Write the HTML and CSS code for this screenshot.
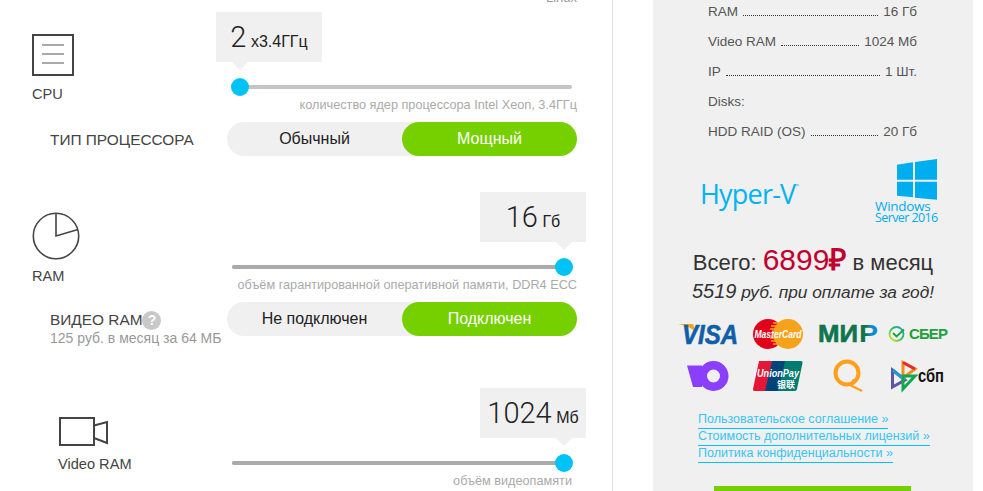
FILE: index.html
```html
<!DOCTYPE html>
<html>
<head>
    <title>Конфигуратор сервера</title>
    <link rel="stylesheet" href="styles.css">
</head>
<body>
    <div class="page">
        <div class="config">
            <div class="os-note">Linux</div>

            <div class="section section-cpu">
                <div class="resource">
                    <svg class="icon" width="42" height="42" viewBox="0 0 42 42">
                        <rect x="1" y="1" width="40" height="40" fill="none" stroke="#444" stroke-width="2"/>
                        <path d="M10 11H32M10 20H32M10 29H32" fill="none" stroke="#555" stroke-width="1.2"/>
                    </svg>
                    <div class="resource-name">CPU</div>
                </div>
                <div class="control">
                    <div class="slider">
                        <div class="bubble" style="left: -16px"><span class="big">2</span> <span class="unit">x3.4ГГц</span></div>
                        <div class="knob" style="left: 8px"></div>
                    </div>
                    <div class="caption">количество ядер процессора Intel Xeon, 3.4ГГц</div>
                </div>
                <div class="option">ТИП ПРОЦЕССОРА</div>
                <div class="toggle">
                    <div class="toggle-item">Обычный</div>
                    <div class="toggle-item active">Мощный</div>
                </div>
            </div>

            <div class="section section-ram">
                <div class="resource">
                    <svg class="icon" width="48" height="48" viewBox="0 0 48 48">
                        <circle cx="24" cy="24" r="22.7" fill="none" stroke="#444" stroke-width="1.6"/>
                        <path d="M24 1.5V24L46 17.5" fill="none" stroke="#444" stroke-width="1.6"/>
                    </svg>
                    <div class="resource-name">RAM</div>
                </div>
                <div class="control">
                    <div class="slider">
                        <div class="fill" style="width: 100%"></div>
                        <div class="bubble" style="left: 248px"><span class="big">16</span> <span class="unit">Гб</span></div>
                        <div class="knob" style="left: 332px"></div>
                    </div>
                    <div class="caption">объём гарантированной оперативной памяти, DDR4 ECC</div>
                </div>
                <div class="option option-top">
                    ВИДЕО RAM<span class="hint">?</span>
                    <div class="option-sub">125 руб. в месяц за 64 МБ</div>
                </div>
                <div class="toggle">
                    <div class="toggle-item">Не подключен</div>
                    <div class="toggle-item active">Подключен</div>
                </div>
            </div>

            <div class="section section-video">
                <div class="resource">
                    <svg class="icon" width="49" height="30" viewBox="0 0 49 30">
                        <rect x="1" y="1" width="34" height="27" fill="none" stroke="#444" stroke-width="2"/>
                        <path d="M35 8.500L48 5V26L35 21" fill="none" stroke="#444" stroke-width="2"/>
                    </svg>
                    <div class="resource-name">Video RAM</div>
                </div>
                <div class="control">
                    <div class="slider">
                        <div class="fill" style="width: 100%"></div>
                        <div class="bubble" style="left: 248px"><span class="big">1024</span> <span class="unit">Мб</span></div>
                        <div class="knob" style="left: 332px"></div>
                    </div>
                    <div class="caption caption-video">объём видеопамяти</div>
                </div>
            </div>
        </div>

        <div class="summary">
            <div class="spec-list">
                <div class="spec"><span>RAM</span><i></i><span>16 Гб</span></div>
                <div class="spec"><span>Video RAM</span><i></i><span>1024 Мб</span></div>
                <div class="spec"><span>IP</span><i></i><span>1 Шт.</span></div>
                <div class="spec"><span>Disks:</span></div>
                <div class="spec"><span>HDD RAID (OS)</span><i></i><span>20 Гб</span></div>
            </div>

            <div class="brands">
                <div class="hyperv">Hyper-V<sup>™</sup></div>
                <div class="winserver">
                    <svg class="winlogo" width="40" height="41" viewBox="0 0 40 41">
                        <path fill="#00adef" d="M0 5.700L16 3.300V20.700H0ZM18 3L40 0V20.700H18ZM0 22.700H16V38.300L0 36.700ZM18 22.700H40V40.700L18 38.700Z"/>
                    </svg>
                    <div class="winname">Windows</div>
                    <div class="winname winname-server">Server 2016</div>
                </div>
            </div>

            <div class="total">Всего: <span class="price">6899<b>₽</b></span> в месяц</div>
            <div class="annual"><span class="annual-num">5519</span> руб. при оплате за год!</div>

            <div class="pay-grid">
                <div class="pay">
                    <svg width="60" height="24" viewBox="0 0 60 24">
                        <path d="M0 2H15L18 11Q13 4 0 2Z" fill="#f4a11d"/>
                        <text x="4" y="21.500" class="visa" textLength="56" lengthAdjust="spacingAndGlyphs">VISA</text>
                    </svg>
                </div>
                <div class="pay">
                    <svg width="50" height="30" viewBox="0 0 50 30">
                        <circle cx="15" cy="15" r="15" fill="#e2001a"/>
                        <circle cx="35" cy="15" r="15" fill="#f7a21b"/>
                        <path d="M20 4H30M18 7H32M17 10H33M17 19H33M18 22H32M20 25H30" stroke="#f7a21b" stroke-width="1.400"/>
                        <text x="25" y="19" class="mc" text-anchor="middle" textLength="47" lengthAdjust="spacingAndGlyphs">MasterCard</text>
                    </svg>
                </div>
                <div class="pay">
                    <svg width="60" height="18" viewBox="0 0 60 18">
                        <defs>
                            <linearGradient id="mirP" x1="0" y1="0" x2="1" y2="0">
                                <stop offset="0" stop-color="#0f754e"/>
                                <stop offset="0.4" stop-color="#0f754e"/>
                                <stop offset="0.6" stop-color="#0f8bc9"/>
                                <stop offset="1" stop-color="#0f8bc9"/>
                            </linearGradient>
                        </defs>
                        <text x="0" y="17" class="mir" textLength="40" lengthAdjust="spacingAndGlyphs">МИ</text>
                        <text x="41" y="17" class="mir mir-p" textLength="19" lengthAdjust="spacingAndGlyphs">Р</text>
                    </svg>
                </div>
                <div class="pay">
                    <svg width="60" height="18" viewBox="0 0 60 18">
                        <defs>
                            <linearGradient id="sberRing" x1="0" y1="1" x2="1" y2="0">
                                <stop offset="0" stop-color="#f2e913"/>
                                <stop offset="0.5" stop-color="#21c45a"/>
                                <stop offset="1" stop-color="#1aa0d8"/>
                            </linearGradient>
                        </defs>
                        <circle cx="8.500" cy="9" r="7" fill="none" stroke="url(#sberRing)" stroke-width="1.800"/>
                        <path d="M5 8L8.500 11.500L16 4.500" fill="none" stroke="#21a038" stroke-width="1.800"/>
                        <text x="21" y="14" class="sber" textLength="39">СБЕР</text>
                    </svg>
                </div>
                <div class="pay">
                    <svg width="42" height="30" viewBox="0 0 42 30">
                        <path fill="#8b3ffd" d="M0 4.500H15V26H6Z"/>
                        <path fill="#8b3ffd" fill-rule="evenodd" d="M26.500 0A15 15 0 1 1 26.500 30A15 15 0 1 1 26.500 0ZM26.500 8.500A6.500 6.500 0 1 0 26.500 21.500A6.500 6.500 0 1 0 26.500 8.500Z"/>
                    </svg>
                </div>
                <div class="pay">
                    <svg width="50" height="30" viewBox="0 0 50 30">
                        <path d="M6 0H22L15 30H1Q0 30 0 28Z" fill="#e21836"/>
                        <path d="M19 0H36L29 30H12Z" fill="#00447c"/>
                        <path d="M32 0H48Q50 0 49.500 2L44 28Q43.500 30 42 30H25Z" fill="#007b6f"/>
                        <text x="25" y="16" class="union" text-anchor="middle" textLength="42" lengthAdjust="spacingAndGlyphs">UnionPay</text>
                        <text x="33" y="27" class="union-cn" text-anchor="middle">银联</text>
                    </svg>
                </div>
                <div class="pay">
                    <svg width="30" height="32" viewBox="0 0 30 32">
                        <circle cx="14" cy="13" r="11.500" fill="none" stroke="#ff9f1c" stroke-width="4"/>
                        <path d="M15 24Q21 27 29 31" fill="none" stroke="#ff9f1c" stroke-width="2.200"/>
                        <circle cx="20.500" cy="20.500" r="1.600" fill="#ff9f1c"/>
                    </svg>
                </div>
                <div class="pay">
                    <svg width="54" height="30" viewBox="0 0 54 30">
                        <path d="M1.500 9L14 19L1.500 26Z" fill="none" stroke="#5b57a2" stroke-width="3"/>
                        <path d="M1.500 9L14 19" fill="none" stroke="#1d9ad6" stroke-width="3"/>
                        <path d="M12 1.500V17L24 8Z" fill="none" stroke="#f6891f" stroke-width="3"/>
                        <path d="M12 1.500L24 8" fill="none" stroke="#e52d2d" stroke-width="3"/>
                        <path d="M12 28V15H24Z" fill="none" stroke="#0fa84f" stroke-width="3"/>
                        <text x="27" y="21" class="sbp" textLength="26" lengthAdjust="spacingAndGlyphs">сбп</text>
                    </svg>
                </div>
            </div>

            <div class="links">
                <a href="#">Пользовательское соглашение »</a>
                <a href="#">Стоимость дополнительных лицензий »</a>
                <a href="#">Политика конфиденциальности »</a>
            </div>

            <div class="order-btn"></div>
        </div>
    </div>
</body>
</html>
```

FILE: styles.css
```css
html, body {
    margin: 0;
    height: 491px;
    overflow: hidden;
    background-color: #ffffff;
}

body {
    font-family: "Liberation Sans", Arial, sans-serif;
    color: #444;
}

.page {
    display: flex;
    height: 491px;
    overflow: hidden;
}

.config {
    width: 612px;
    height: 491px;
    flex: none;
    border-right: 1px solid #e2e2e2;
}

.os-note {
    width: 577px;
    height: 14px;
    margin-top: -9px;
    text-align: right;
    font-size: 13px;
    line-height: 14px;
    color: #999;
}

.section {
    display: grid;
    grid-template-columns: 227px 350px;
}

.section-cpu .resource {
    padding-top: 29px;
}

.section-cpu .resource-name {
    margin-top: 9px;
}

.section-ram {
    margin-top: 29px;
}

.section-ram .resource {
    padding-top: 27px;
}

.section-ram .resource-name {
    margin-top: 7px;
}

.section-video {
    margin-top: 35px;
}

.section-video .resource {
    padding: 36px 0 0 58px;
}

.section-video .icon {
    margin-left: 1px;
}

.resource {
    padding-left: 32px;
}

.icon {
    display: block;
}

.resource-name {
    margin-top: 8px;
    font-size: 14.600px;
    line-height: 18px;
}

.slider {
    position: relative;
    height: 4px;
    margin: 80px 5px 0;
    background-color: #c4c4c4;
    border-radius: 2px;
}

.fill {
    height: 4px;
    background-color: #aaaaaa;
    border-radius: 2px;
}

.knob {
    position: absolute;
    top: -7px;
    width: 18px;
    height: 18px;
    margin-left: -9px;
    background-color: #00c3f5;
    border-radius: 50%;
}

.knob::before {
    content: "";
    position: absolute;
    left: 1px;
    top: -16px;
    border-top: 8px solid #f0f0f0;
    border-left: 8px solid transparent;
    border-right: 8px solid transparent;
}

.bubble {
    position: absolute;
    top: -73px;
    width: 106px;
    height: 50px;
    background-color: #f0f0f0;
    text-align: center;
    line-height: 50px;
    color: #222;
    white-space: nowrap;
}

.big {
    font-family: Roboto, "Liberation Sans", sans-serif;
    font-size: 29px;
    font-weight: 300;
}

.unit {
    font-size: 16px;
}

.caption {
    margin-top: 8px;
    height: 16px;
    text-align: right;
    font-size: 12.700px;
    line-height: 16px;
    color: #aaa;
}

.caption-video {
    padding-right: 5px;
}

.option {
    height: 34px;
    padding-left: 50px;
    margin-top: 9px;
    font-size: 15.400px;
    line-height: 36px;
}

.option-top {
    height: auto;
    line-height: 18px;
    padding-top: 9px;
}

.option-sub {
    font-size: 14px;
    line-height: 16px;
    color: #999;
    white-space: nowrap;
}

.hint {
    display: inline-block;
    width: 19px;
    height: 19px;
    background-color: #c8c8c8;
    border-radius: 50%;
    text-align: center;
    vertical-align: top;
    font-size: 14px;
    font-weight: bold;
    line-height: 19px;
    color: #ffffff;
}

.toggle {
    display: flex;
    align-self: start;
    height: 34px;
    margin-top: 9px;
    background-color: #f0f0f0;
    border-radius: 17px;
}

.toggle-item {
    flex: 1;
    text-align: center;
    font-size: 16px;
    line-height: 34px;
    color: #222;
}

.toggle-item.active {
    background-color: #76d000;
    border-radius: 17px;
    color: #ffffff;
}

.summary {
    width: 320px;
    height: 491px;
    flex: none;
    margin-left: 40px;
    background-color: #f0f0f0;
}

.spec-list {
    width: 209px;
    margin: -3px 0 0 55px;
}

.spec {
    display: flex;
    align-items: baseline;
    font-size: 13.500px;
    line-height: 30px;
    color: #555;
}

.spec i {
    flex: 1;
    margin: 0 5px;
    border-bottom: 1px dotted #333;
}

.brands {
    display: flex;
    justify-content: space-between;
    height: 63px;
    margin: 12px 35px 0 47px;
}

.hyperv {
    margin-top: 17px;
    font-family: "Open Sans", sans-serif;
    font-size: 27px;
    letter-spacing: -0.8px;
    line-height: 36px;
    color: #00b4f0;
}

.hyperv sup {
    font-size: 5px;
    vertical-align: 16px;
    line-height: 0;
}

.winserver {
    width: 63px;
}

.winlogo {
    display: block;
    margin-left: 22px;
}

.winname {
    font-family: "Open Sans", sans-serif;
    font-size: 13.500px;
    line-height: 12px;
    letter-spacing: -0.3px;
    color: #00adef;
    white-space: nowrap;
}

.winname-server {
    font-size: 12.500px;
    letter-spacing: -0.6px;
}

.total {
    height: 30px;
    margin-top: 23px;
    text-align: center;
    font-size: 22px;
    line-height: 30px;
    color: #333;
}

.price {
    font-size: 30px;
    line-height: 1;
    color: #c0002f;
}

.annual {
    height: 26px;
    margin-top: 4px;
    text-align: center;
    font-size: 17.300px;
    font-style: italic;
    line-height: 26px;
    color: #333;
}

.annual-num {
    font-size: 20px;
    line-height: 1;
}

.pay-grid {
    display: grid;
    grid-template-columns: repeat(4, 70px);
    grid-auto-rows: 42px;
    margin: 8px 0 0 20px;
}

.pay {
    display: flex;
    align-items: center;
    justify-content: center;
}

.pay svg {
    display: block;
    overflow: visible;
}

.visa {
    font-size: 27px;
    font-weight: bold;
    font-style: italic;
    fill: #0f5ea8;
    stroke: #0f5ea8;
    stroke-width: 0.6px;
}

.mc {
    font-size: 10.500px;
    font-weight: bold;
    font-style: italic;
    fill: #ffffff;
}

.mir {
    font-size: 23px;
    font-weight: bold;
    fill: #0f754e;
    stroke: #0f754e;
    stroke-width: 0.6px;
}

.mir-p {
    fill: url(#mirP);
    stroke: none;
}

.sber {
    font-size: 15px;
    font-weight: bold;
    fill: #21a038;
}

.union {
    font-size: 10px;
    font-weight: bold;
    font-style: italic;
    fill: #ffffff;
}

.union-cn {
    font-family: "Noto Sans CJK SC", sans-serif;
    font-size: 9px;
    font-weight: bold;
    fill: #ffffff;
}

.sbp {
    font-size: 18px;
    font-weight: bold;
    fill: #111111;
}

.links {
    margin: 15px 0 0 45px;
}

.links a {
    display: table;
    height: 16px;
    font-size: 12.500px;
    line-height: 15px;
    color: #35c6f5;
    text-decoration: none;
    border-bottom: 1px solid #00c3f5;
}

.order-btn {
    width: 197px;
    height: 40px;
    margin: 23px 0 0 61px;
    background-color: #76d000;
}
```
